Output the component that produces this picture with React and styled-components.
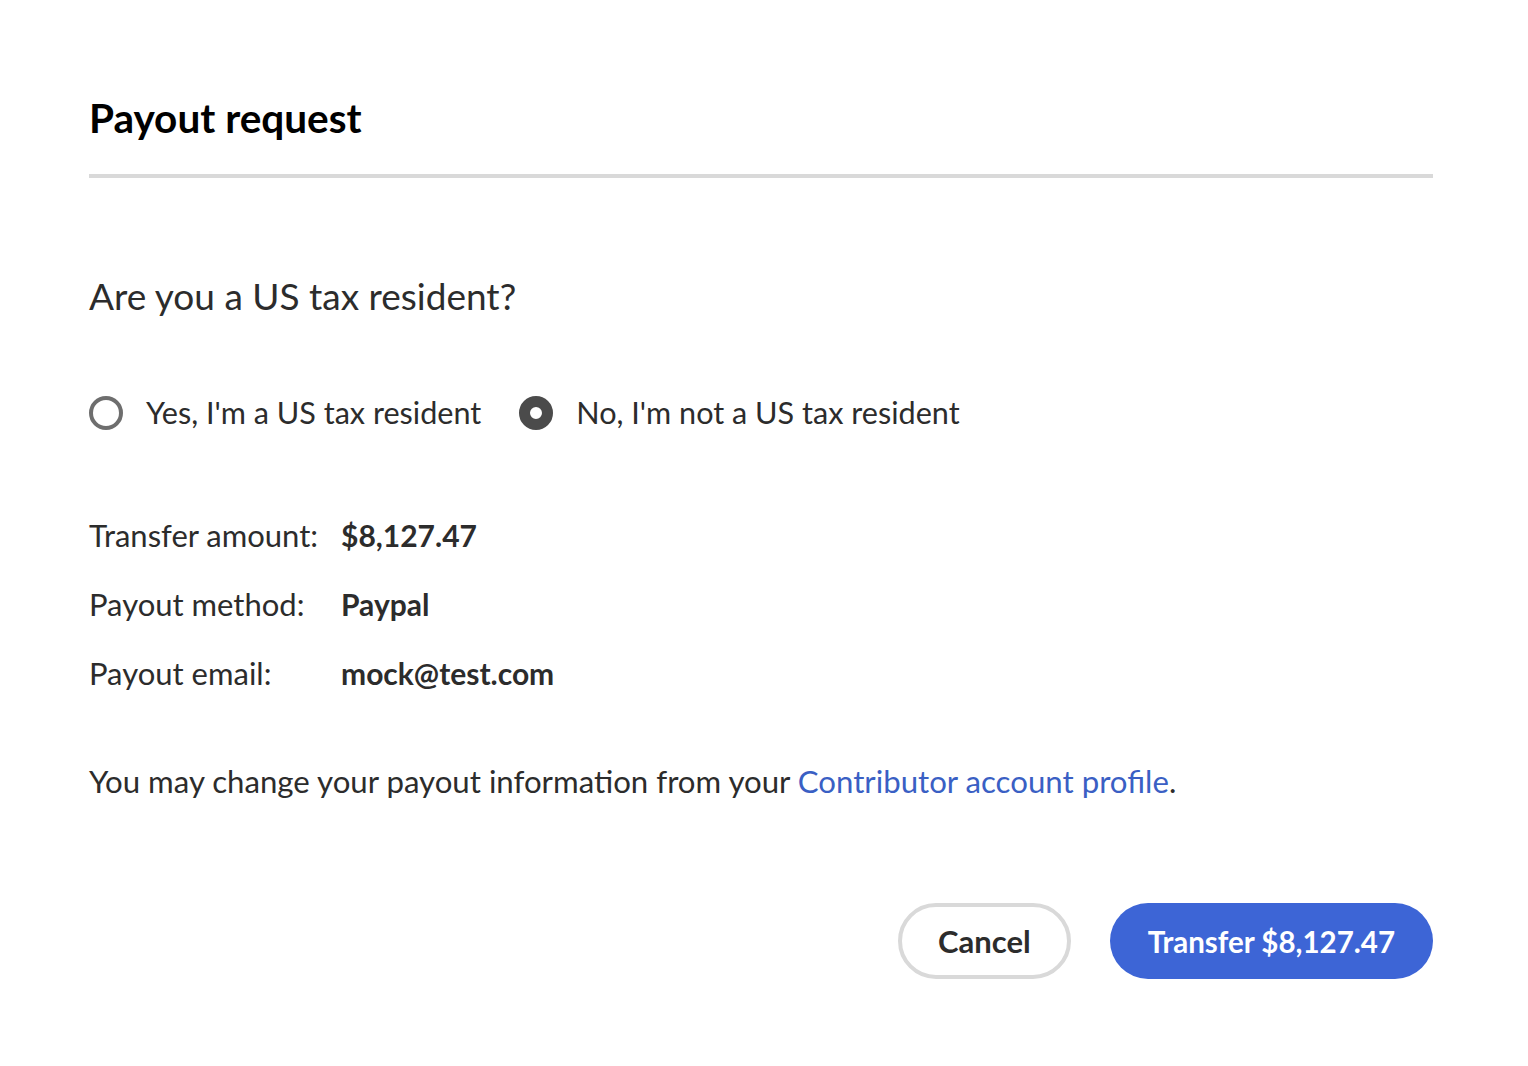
import React, { useState } from "react";
import styled, { createGlobalStyle } from "styled-components";

const Global = createGlobalStyle`
  html, body { margin: 0; padding: 0; background: #fff; }
  body { font-family: "Lato", "Open Sans", sans-serif; color: #2c2c2c; }
  * { box-sizing: border-box; }
`;

const Dialog = styled.div`
  width: 1528px;
  height: 1066px;
  padding: 92px 95px 0 89px;
  display: flex;
  flex-direction: column;
`;

const Title = styled.h1`
  margin: 0;
  font-size: 40.5px;
  font-weight: 700;
  color: #000;
  line-height: 52px;
`;

const Divider = styled.hr`
  margin: 30px 0 0;
  border: none;
  height: 4px;
  background: #d9d9d9;
`;

const Question = styled.h2`
  margin: 93px 0 0;
  font-size: 37px;
  font-weight: 400;
  line-height: 50px;
  color: #2c2c2c;
`;

const RadioGroup = styled.div`
  display: flex;
  gap: 38px;
  margin-top: 70px;
`;

const RadioLabel = styled.label`
  display: flex;
  align-items: center;
  gap: 23px;
  font-size: 30.6px;
  line-height: 44px;
  cursor: pointer;
`;

const RadioDot = styled.span`
  width: 34px;
  height: 34px;
  border-radius: 50%;
  flex: none;
  ${(p) =>
    p.$checked
      ? `border: 11px solid #4b4b4b; background: #fff;`
      : `border: 4px solid #6e6e6e; background: #fff;`}
`;

const Details = styled.div`
  display: grid;
  grid-template-columns: 252px auto;
  row-gap: 25px;
  margin-top: 78px;
  font-size: 31px;
  line-height: 44px;
`;

const Key = styled.div`
  color: #2c2c2c;
`;

const Value = styled.div`
  font-weight: 700;
  font-size: 30px;
  color: #2c2c2c;
`;

const Note = styled.p`
  margin: 64px 0 0;
  font-size: 31.2px;
  line-height: 44px;
`;

const Link = styled.a`
  color: #3a5fc4;
  text-decoration: none;
`;

const Actions = styled.div`
  display: flex;
  justify-content: flex-end;
  gap: 39px;
  margin-top: 100px;
`;

const Button = styled.button`
  height: 76px;
  border-radius: 38px;
  font-family: inherit;
  font-size: ${(p) => (p.$primary ? "29.5px" : "31px")};
  font-weight: 700;
  white-space: nowrap;
  cursor: pointer;
  ${(p) =>
    p.$primary
      ? `background: #3d65d6; color: #fff; border: none; padding: 0 38px;`
      : `background: #fff; color: #2c2c2c; border: 4px solid #d9d9d9; padding: 0 36px;`}
`;

export default function App() {
  const [resident, setResident] = useState(false);
  return (
    <>
      <Global />
      <Dialog>
        <Title>Payout request</Title>
        <Divider />
        <Question>Are you a US tax resident?</Question>
        <RadioGroup>
          <RadioLabel onClick={() => setResident(true)}>
            <RadioDot $checked={resident} />
            Yes, I'm a US tax resident
          </RadioLabel>
          <RadioLabel onClick={() => setResident(false)}>
            <RadioDot $checked={!resident} />
            No, I'm not a US tax resident
          </RadioLabel>
        </RadioGroup>
        <Details>
          <Key>Transfer amount:</Key>
          <Value>$8,127.47</Value>
          <Key>Payout method:</Key>
          <Value>Paypal</Value>
          <Key>Payout email:</Key>
          <Value>mock@test.com</Value>
        </Details>
        <Note>
          You may change your payout information from your{" "}
          <Link href="#">Contributor account profile</Link>.
        </Note>
        <Actions>
          <Button>Cancel</Button>
          <Button $primary>Transfer $8,127.47</Button>
        </Actions>
      </Dialog>
    </>
  );
}
